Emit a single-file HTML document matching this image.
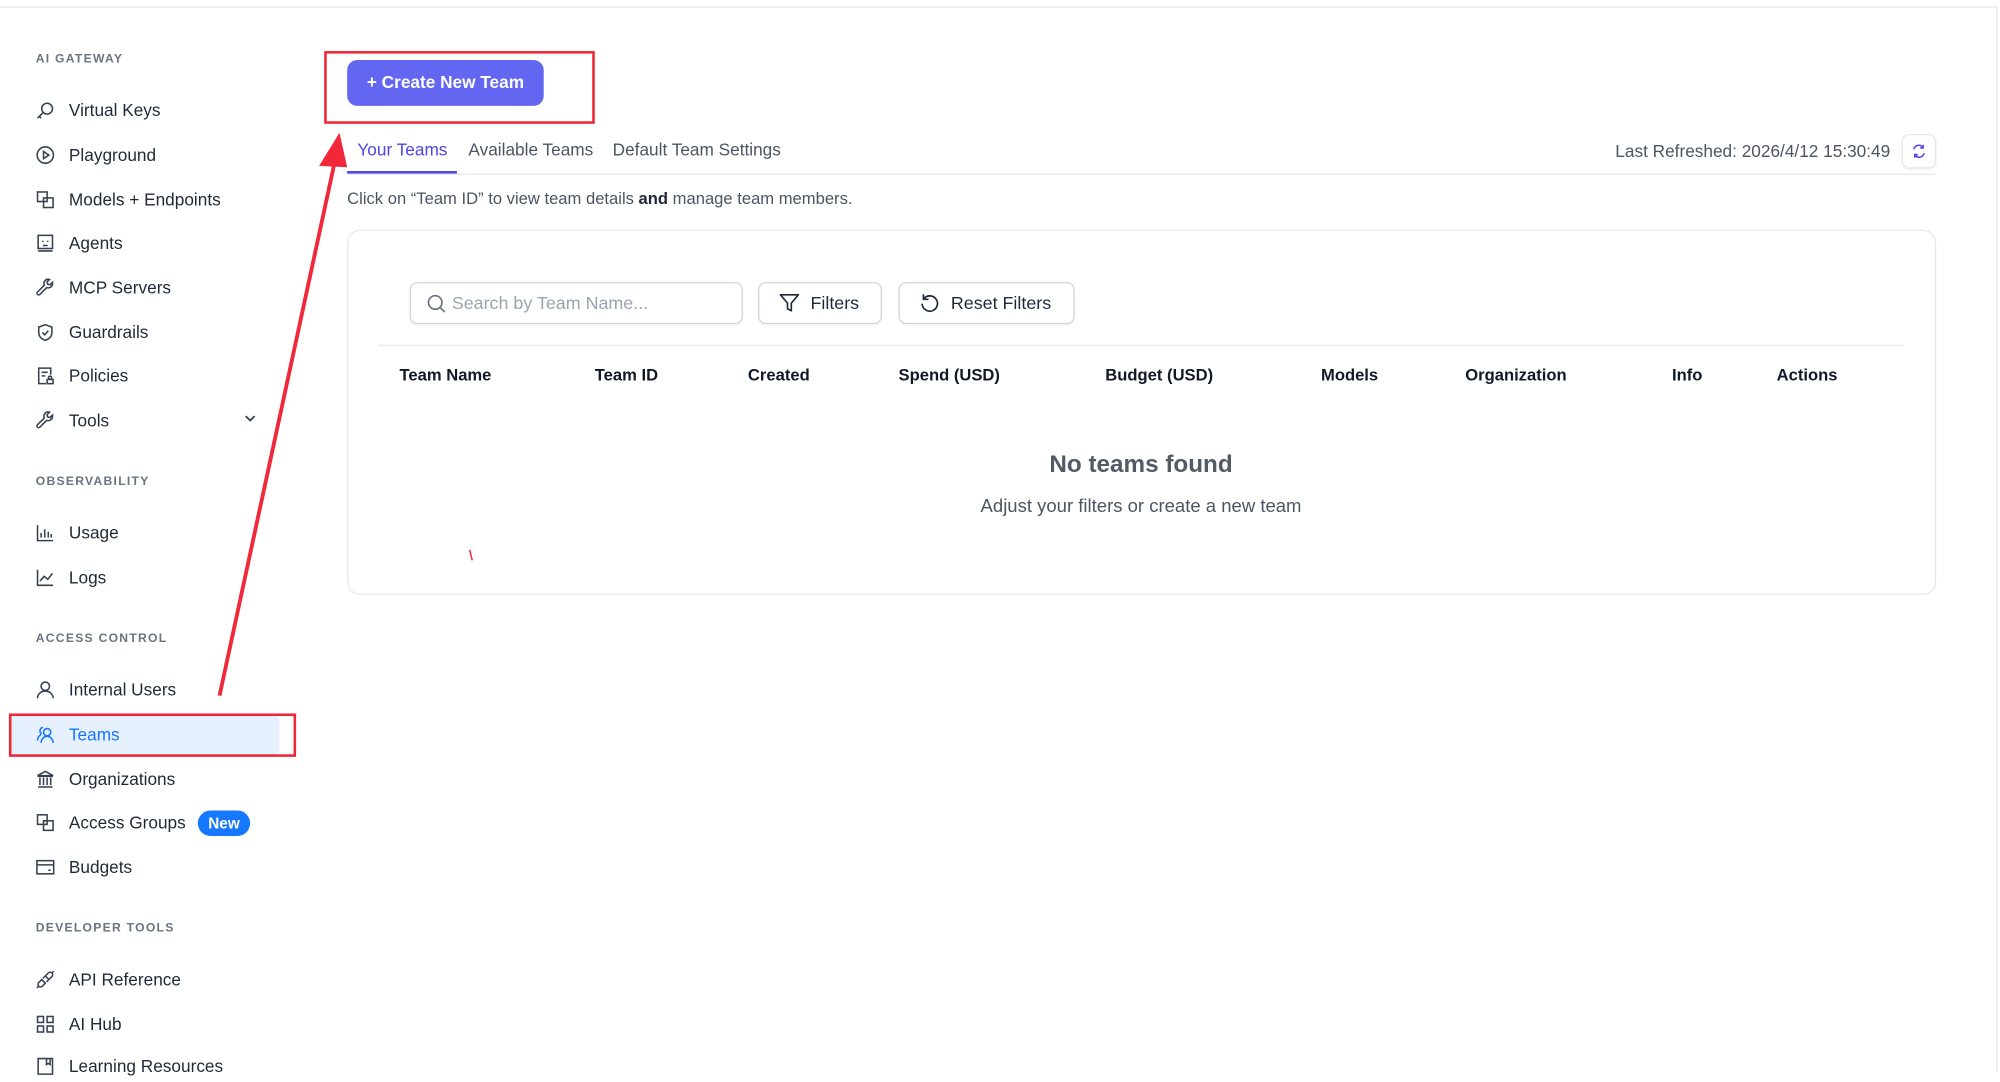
<!DOCTYPE html>
<html><head><meta charset="utf-8"><style>
html,body{margin:0;padding:0;background:#fff;overflow:hidden;width:2000px;height:1072px}
#w{position:absolute;left:0;top:0;width:1567px;height:840px;transform:scale(1.27632);transform-origin:0 0;font-family:"Liberation Sans",Arial,sans-serif;color:#1f2937}
.a{position:absolute;white-space:nowrap}
.sec{font-size:9.5px;font-weight:bold;letter-spacing:1px;color:#6b7280;left:28px}
.it{font-size:13.5px;color:#1f2937;left:54px;line-height:16px}
.ic{position:absolute;left:28px;width:15px;height:15px}
.ic svg{width:15px;height:15px;fill:none;stroke:#374151;stroke-width:1.3}
.th{font-size:13px;font-weight:bold;color:#111827;top:286px}
.btn{position:absolute;border:1px solid #d1d5db;border-radius:6px;height:31px;box-shadow:0 1px 2px rgba(0,0,0,.05);font-size:14px;color:#1f2937}
</style></head><body><div id="w">
<div class="a" style="left:0;top:5px;width:1565px;height:1px;background:#e5e7eb"></div>
<div class="a" style="left:1564px;top:5px;width:1px;height:835px;background:#e5e7eb"></div>

<div class="a sec" style="top:41px">AI GATEWAY</div>
<div class="ic" style="top:79px"><svg viewBox="0 0 16 16"><circle cx="9.5" cy="6.5" r="4.5"/><path d="M6.3 9.7L1.5 14.5M3 13l1.5 1.5"/></svg></div><div class="a it" style="top:79px">Virtual Keys</div>
<div class="ic" style="top:114px"><svg viewBox="0 0 16 16"><circle cx="8" cy="8" r="6.8"/><path d="M6.5 5v6l4.5-3z"/></svg></div><div class="a it" style="top:114px">Playground</div>
<div class="ic" style="top:149px"><svg viewBox="0 0 16 16"><rect x="1.5" y="1.5" width="8" height="8"/><rect x="6.5" y="6.5" width="8" height="8"/></svg></div><div class="a it" style="top:149px">Models + Endpoints</div>
<div class="ic" style="top:183px"><svg viewBox="0 0 16 16"><rect x="2" y="1.5" width="12" height="11"/><path d="M2 14.5h12M6 6v1M10 6v1M6 10h4"/></svg></div><div class="a it" style="top:183px">Agents</div>
<div class="ic" style="top:218px"><svg viewBox="0 0 16 16"><path d="M14 4.5a3.5 3.5 0 0 1-4.8 3.3L3.5 13.5a1.3 1.3 0 0 1-2-2l5.7-5.7A3.5 3.5 0 0 1 11.5 1L9.5 3l.5 2 2 .5 2-2z"/></svg></div><div class="a it" style="top:218px">MCP Servers</div>
<div class="ic" style="top:253px"><svg viewBox="0 0 16 16"><path d="M8 1.5l5.5 2v4.5c0 3.5-2.5 5.5-5.5 6.5C5 13.5 2.5 11.5 2.5 8V3.5z"/><path d="M5.5 8l2 2 3-3.5"/></svg></div><div class="a it" style="top:253px">Guardrails</div>
<div class="ic" style="top:287px"><svg viewBox="0 0 16 16"><path d="M12.5 7V1.5h-10v13h6M5 5h5M5 8h3"/><rect x="9.5" y="11" width="5" height="3.5"/><circle cx="12" cy="9.5" r="1.3"/></svg></div><div class="a it" style="top:287px">Policies</div>
<div class="ic" style="top:322px"><svg viewBox="0 0 16 16"><path d="M14 4.5a3.5 3.5 0 0 1-4.8 3.3L3.5 13.5a1.3 1.3 0 0 1-2-2l5.7-5.7A3.5 3.5 0 0 1 11.5 1L9.5 3l.5 2 2 .5 2-2z"/></svg></div><div class="a it" style="top:322px">Tools</div>
<svg class="a" style="left:191px;top:324px" width="10" height="8" viewBox="0 0 10 8"><path d="M1.5 2l3.5 3.5L8.5 2" fill="none" stroke="#374151" stroke-width="1.4"/></svg>

<div class="a sec" style="top:372px">OBSERVABILITY</div>
<div class="ic" style="top:410px"><svg viewBox="0 0 16 16"><path d="M1.5 1.5v13h13M4.5 12V8M7.5 12V5M10.5 12V7M13 12V9"/></svg></div><div class="a it" style="top:410px">Usage</div>
<div class="ic" style="top:445px"><svg viewBox="0 0 16 16"><path d="M1.5 1.5v13h13M3.5 11l3.5-4 3 2.5 4-5"/></svg></div><div class="a it" style="top:445px">Logs</div>

<div class="a sec" style="top:495px">ACCESS CONTROL</div>
<div class="ic" style="top:533px"><svg viewBox="0 0 16 16"><circle cx="8" cy="5" r="3.5"/><path d="M1.5 15c0-3.5 3-6 6.5-6s6.5 2.5 6.5 6"/></svg></div><div class="a it" style="top:533px">Internal Users</div>
<div class="a" style="left:8px;top:561px;width:211px;height:30px;background:#e6f0ff;border-radius:4px"></div>
<div class="ic" style="top:568px"><svg viewBox="0 0 16 16" style="stroke:#1677ff"><circle cx="9.5" cy="6" r="3"/><path d="M4.5 15c0-3 2.2-5.5 5-5.5s5 2.5 5 5.5M6 2a3 3 0 0 0-1 5.5M1.5 13c0-2.5 1-4 3-5"/></svg></div><div class="a it" style="top:568px;color:#1677ff">Teams</div>
<div class="ic" style="top:603px"><svg viewBox="0 0 16 16"><path d="M1.5 5L8 1.5 14.5 5zM2 14.5h12M3.5 6.5v6.5M6.5 6.5v6.5M9.5 6.5v6.5M12.5 6.5v6.5M1.5 5.5h13"/></svg></div><div class="a it" style="top:603px">Organizations</div>
<div class="ic" style="top:637px"><svg viewBox="0 0 16 16"><rect x="1.5" y="1.5" width="8" height="8"/><rect x="6.5" y="6.5" width="8" height="8"/></svg></div><div class="a it" style="top:637px">Access Groups</div>
<div class="a" style="left:155px;top:635px;width:41px;height:20px;border-radius:10px;background:#1677ff;color:#fff;font-size:12px;font-weight:bold;text-align:center;line-height:20px">New</div>
<div class="ic" style="top:672px"><svg viewBox="0 0 16 16"><rect x="1" y="2.5" width="14" height="11"/><path d="M1 6h14M10.5 10.5h2"/></svg></div><div class="a it" style="top:672px">Budgets</div>

<div class="a sec" style="top:722px">DEVELOPER TOOLS</div>
<div class="ic" style="top:760px"><svg viewBox="0 0 16 16"><path d="M5 8l3 3-2.5 2.5a2 2 0 0 1-3-3zM8 5l3 3 2.5-2.5a2 2 0 0 0-3-3zM1 15l1.5-1.5M15 1l-1.5 1.5M6 7l1.5-1.5M9 10l1.5-1.5"/></svg></div><div class="a it" style="top:760px">API Reference</div>
<div class="ic" style="top:795px"><svg viewBox="0 0 16 16"><rect x="1.5" y="1.5" width="5" height="5"/><rect x="9.5" y="1.5" width="5" height="5"/><rect x="1.5" y="9.5" width="5" height="5"/><rect x="9.5" y="9.5" width="5" height="5"/></svg></div><div class="a it" style="top:795px">AI Hub</div>
<div class="ic" style="top:828px"><svg viewBox="0 0 16 16"><path d="M2 1.5h12v13H2zM9 1.5v5l1.5-1 1.5 1v-5"/></svg></div><div class="a it" style="top:828px">Learning Resources</div>

<div class="a" style="left:272px;top:47px;width:154px;height:36px;background:#6366f1;border-radius:8px;color:#fff;font-size:13.5px;font-weight:bold;text-align:center;line-height:36px">+ Create New Team</div>

<div class="a" style="left:280px;top:110px;font-size:13.5px;color:#4f46e5">Your Teams</div>
<div class="a" style="left:367px;top:110px;font-size:13.5px;color:#4b5563">Available Teams</div>
<div class="a" style="left:480px;top:110px;font-size:13.5px;color:#4b5563">Default Team Settings</div>
<div class="a" style="left:272px;top:136px;width:1244px;height:1px;background:#e5e7eb"></div>
<div class="a" style="left:272px;top:134px;width:86px;height:2px;background:#4f46e5"></div>
<div class="a" style="right:86px;top:111px;font-size:13.5px;color:#4b5563">Last Refreshed: 2026/4/12 15:30:49</div>
<div class="a" style="left:1490px;top:105px;width:25px;height:25px;border:1px solid #e5e7eb;border-radius:6px;box-shadow:0 1px 2px rgba(0,0,0,.06)"><svg width="25" height="25" viewBox="0 0 25 25"><path d="M8.5 11a4 4 0 0 1 7.3-1.3M16.5 14a4 4 0 0 1-7.3 1.3M15.8 7.5v2.4h-2.4M9.2 17.5v-2.4h2.4" fill="none" stroke="#4f46e5" stroke-width="1.2"/></svg></div>

<div class="a" style="left:272px;top:148px;font-size:13px;color:#4b5563">Click on “Team ID” to view team details <b style="color:#1f2937">and</b> manage team members.</div>

<div class="a" style="left:272px;top:180px;width:1243px;height:284px;border:1px solid #e5e7eb;border-radius:10px"></div>
<div class="btn" style="left:321px;top:221px;width:259px"><svg style="position:absolute;left:12px;top:8px" width="16" height="16" viewBox="0 0 16 16"><circle cx="7" cy="7" r="5.3" fill="none" stroke="#6b7280" stroke-width="1.3"/><path d="M11 11l3.5 3.5" stroke="#6b7280" stroke-width="1.3"/></svg><span class="a" style="left:32px;top:7px;color:#9ca3af">Search by Team Name...</span></div>
<div class="btn" style="left:594px;top:221px;width:95px"><svg style="position:absolute;left:15px;top:7px" width="17" height="17" viewBox="0 0 17 17"><path d="M1.5 2h14l-5.5 6.5v6l-3-1.5V8.5z" fill="none" stroke="#1f2937" stroke-width="1.3" stroke-linejoin="round"/></svg><span class="a" style="left:40px;top:7px">Filters</span></div>
<div class="btn" style="left:704px;top:221px;width:136px"><svg style="position:absolute;left:15px;top:7px" width="17" height="17" viewBox="0 0 17 17"><path d="M3.5 5.5A6 6 0 1 1 2.5 9M3.5 1.5v4h4" fill="none" stroke="#1f2937" stroke-width="1.3"/></svg><span class="a" style="left:40px;top:7px">Reset Filters</span></div>
<div class="a" style="left:296px;top:270px;width:1195px;height:1px;background:#e5e7eb"></div>

<div class="a th" style="left:313px">Team Name</div>
<div class="a th" style="left:466px">Team ID</div>
<div class="a th" style="left:586px">Created</div>
<div class="a th" style="left:704px">Spend (USD)</div>
<div class="a th" style="left:866px">Budget (USD)</div>
<div class="a th" style="left:1035px">Models</div>
<div class="a th" style="left:1148px">Organization</div>
<div class="a th" style="left:1310px">Info</div>
<div class="a th" style="left:1392px">Actions</div>

<div class="a" style="left:272px;width:1244px;top:354px;text-align:center;font-size:19px;font-weight:bold;color:#525a66">No teams found</div>
<div class="a" style="left:272px;width:1244px;top:389px;text-align:center;font-size:14.5px;color:#4b5563">Adjust your filters or create a new team</div>

<div class="a" style="left:254px;top:40px;width:208px;height:53px;border:2.5px solid #ef2636"></div>
<div class="a" style="left:7px;top:559px;width:221px;height:30px;border:2.5px solid #ef2636"></div>
<svg class="a" style="left:0;top:0" width="600" height="600"><path d="M172 545L262 128" stroke="#f0283a" stroke-width="3"/><path d="M266 104L250 130L272 131z" fill="#f0283a"/><path d="M368 431l2 8" stroke="#f0283a" stroke-width="1.2"/></svg>
</div></body></html>
